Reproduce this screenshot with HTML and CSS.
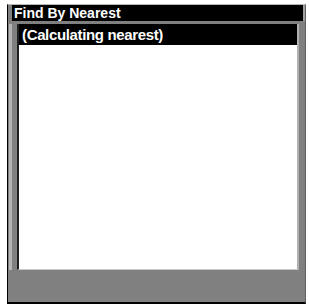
FILE: index.html
```html
<!DOCTYPE html>
<html lang="en">
<head>
    <meta charset="UTF-8">
    <title>Find By Nearest</title>
    <link rel="stylesheet" href="styles.css">
</head>
<body>
    <div class="dialog">
        <div class="title-bar">Find By Nearest</div>
        <div class="dialog-body">
            <div class="stripe"></div>
            <div class="list-box">
                <div class="list-item selected">(Calculating nearest)</div>
            </div>
        </div>
    </div>
</body>
</html>
```

FILE: styles.css
```css
body {
    margin: 0;
    background: #fff;
    font-family: "Liberation Sans", Arial, sans-serif;
}
.dialog {
    margin: 4px 0 0 7px;
    width: 297px;
    height: 297px;
    border-top: 1px solid #b8b8b8;
    border-right: 1px solid #606060;
    border-left: 1px solid #000;
    border-bottom: 2px solid #000;
    background: #808080;
    display: flex;
    flex-direction: column;
}
.title-bar {
    background: #000;
    color: #fff;
    font-weight: bold;
    font-size: 14px;
    line-height: 16px;
    height: 16px;
    padding-left: 2px;
    margin-left: 4px;
    border-right: 2px solid #a0a0a0;
}
.dialog-body {
    flex: 1;
    display: flex;
    padding: 3px 6px 32px 0;
}
.stripe {
    width: 3px;
    margin-left: 1px;
    background: #b4b4b4;
    margin-right: 5px;
}
.list-box {
    flex: 1;
    background: #fff;
    border-left: 2px solid #202020;
    border-right: 2px solid #b0b0b0;
    border-bottom: 1px solid #c8c8c8;
}
.list-item {
    font-weight: bold;
    font-size: 15px;
    letter-spacing: -0.35px;
    height: 21px;
    line-height: 21px;
    padding-left: 3px;
}
.selected {
    background: #000;
    color: #fff;
}
```
